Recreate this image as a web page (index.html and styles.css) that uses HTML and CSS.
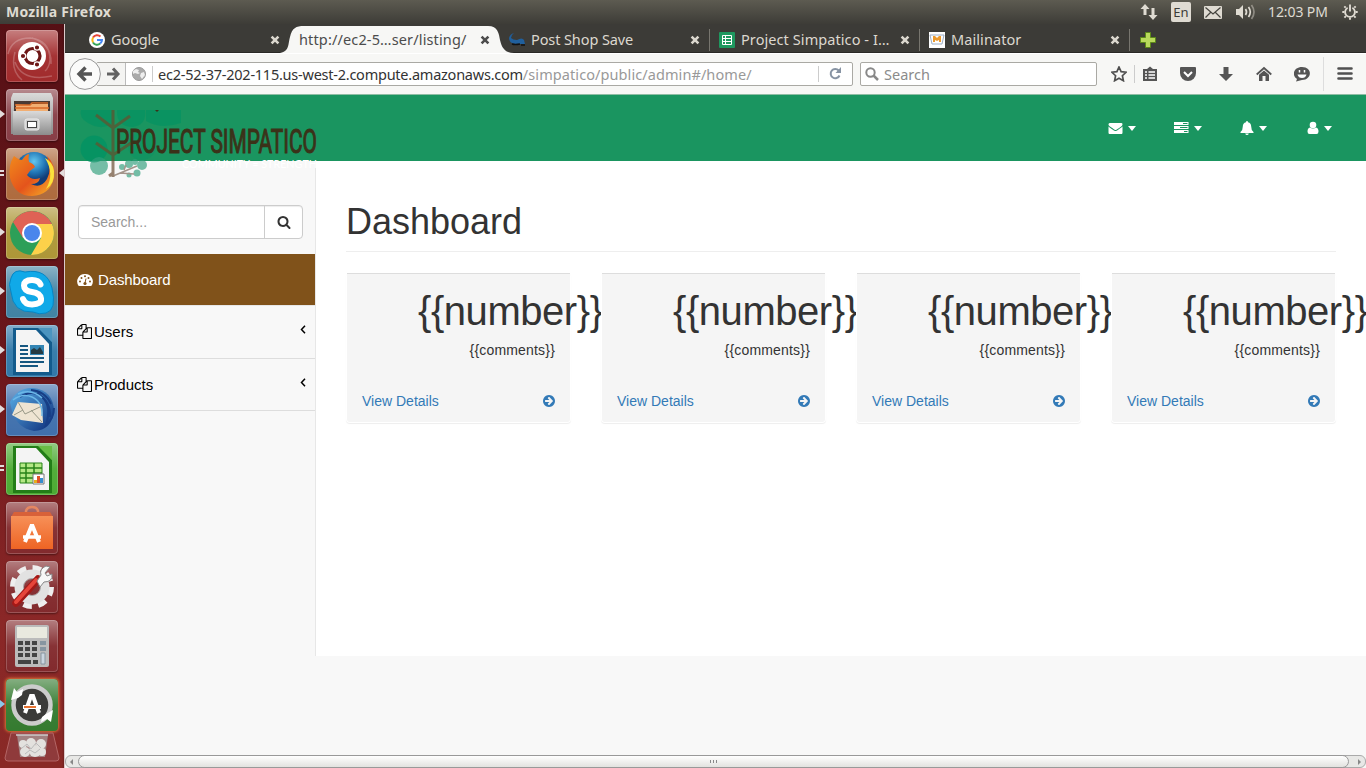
FILE: index.html
```html
<!DOCTYPE html>
<html lang="en">
<head>
<meta charset="utf-8">
<title>Mozilla Firefox</title>
<link rel="stylesheet" href="styles.css">
</head>
<body>
<svg class="defs" width="0" height="0">
<defs>
<linearGradient id="gloss" x2="0" y2="1"><stop stop-color="#fff" stop-opacity=".42"/><stop offset=".5" stop-color="#fff" stop-opacity=".08"/><stop offset="1" stop-color="#fff" stop-opacity=".04"/></linearGradient>
<linearGradient id="silver" x2="0" y2="1"><stop stop-color="#dadada"/><stop offset="1" stop-color="#8c8c8c"/></linearGradient>
<linearGradient id="orange" x2="0" y2="1"><stop stop-color="#f79058"/><stop offset="1" stop-color="#ee6424"/></linearGradient>
<radialGradient id="globe" cx=".5" cy=".25"><stop stop-color="#64c6ee"/><stop offset=".6" stop-color="#2074b4"/><stop offset="1" stop-color="#123c76"/></radialGradient>
<linearGradient id="fox" x2="1" y2="1"><stop stop-color="#f28c1c"/><stop offset=".55" stop-color="#e4541c"/><stop offset="1" stop-color="#f8b828"/></linearGradient>
<linearGradient id="bird" x2="1" y2="1"><stop stop-color="#5cb2ea"/><stop offset="1" stop-color="#0c2c78"/></linearGradient>
<symbol id="mail" viewBox="0 0 1792 1792"><path d="M1792 710v794q0 66-47 113t-113 47h-1472q-66 0-113-47t-47-113v-794q44 49 101 87 362 246 497 345 57 42 92.500 65.500t94.500 48 110 24.500h2q51 0 110-24.500t94.500-48 92.500-65.500q170-123 498-345 57-39 100-87zm0-294q0 79-49 151t-122 123q-376 261-468 325-10 7-42.500 31t-54 38.500-52 32.500-57.500 27-50 9h-2q-23 0-50-9t-57.500-27-52-32.500-54-38.500-42.500-31q-91-64-262-182.500t-205-142.500q-62-42-117-115.500t-55-136.500q0-78 41.500-130t118.500-52h1472q65 0 112.500 47t47.500 113z"/></symbol>
<symbol id="go" viewBox="128 128 1536 1536"><path d="M1413 896q0-27-18-45l-91-91-362-362q-18-18-45-18t-45 18l-91 91q-18 18-18 45t18 45l189 189h-502q-26 0-45 19t-19 45v128q0 26 19 45t45 19h502l-189 189q-19 19-19 45t19 45l91 91q18 18 45 18t45-18l362-362 91-91q18-18 18-45zm251 0q0 209-103 385.500t-279.500 279.500-385.500 103-385.500-103-279.500-279.500-103-385.500 103-385.500 279.500-279.500 385.500-103 385.500 103 279.500 279.500 103 385.500z"/></symbol>
<symbol id="search" viewBox="0 0 1792 1792"><path d="M1216 832q0-185-131.500-316.500t-316.500-131.500-316.500 131.500-131.500 316.500 131.500 316.500 316.500 131.500 316.500-131.500 131.500-316.500zm512 832q0 52-38 90t-90 38q-54 0-90-38l-343-342q-179 124-399 124-143 0-273.500-55.500t-225-150-150-225-55.500-273.500 55.500-273.500 150-225 225-150 273.500-55.500 273.500 55.500 225 150 150 225 55.500 273.500q0 220-124 399l343 343q37 37 37 90z"/></symbol>
<symbol id="files" viewBox="0 0 1792 1792"><path d="M1696 384q40 0 68 28t28 68v1216q0 40-28 68t-68 28h-960q-40 0-68-28t-28-68v-288h-544q-40 0-68-28t-28-68v-672q0-40 20-88t48-76l408-408q28-28 76-48t88-20h416q40 0 68 28t28 68v328q68-40 128-40h416zm-544 213l-299 299h299v-299zm-640-384l-299 299h299v-299zm196 647l316-316v-416h-384v416q0 40-28 68t-68 28h-416v640h512v-256q0-40 20-88t48-76zm956 804v-1152h-384v416q0 40-28 68t-68 28h-416v640h896z"/></symbol>
<symbol id="close" viewBox="0 0 10 10"><path d="M1.600 1.600l6.800 6.800M8.400 1.600L1.600 8.400" fill="none" stroke="currentColor" stroke-width="2.600"/></symbol>
</defs>
</svg>
<div class="desktop">
<header class="topbar">
  <span class="topbar-title">Mozilla Firefox</span>
  <div class="indicators">
    <svg width="18" height="18" viewBox="0 0 18 18"><path d="M5 1L.5 6h3v6h3V6h3zM13 17l4.500-5h-3V5h-3v7h-3z"/></svg>
    <span class="lang">En</span>
    <svg class="ind-mail" width="18" height="13" viewBox="0 0 18 13"><rect width="18" height="13" rx="1"/><path d="M1.500 1.500L9 8l7.500-6.500M1.500 11.500l5-5M16.500 11.500l-5-5" fill="none" stroke="#45443e" stroke-width="1.200"/></svg>
    <svg class="ind-vol" width="20" height="16" viewBox="0 0 20 16"><path d="M0 5h3l4-4v14l-4-4H0z"/><g fill="none" stroke="#dfdbd2" stroke-width="1.700"><path d="M9.500 5q2 3 0 6M12.500 3q3.600 5 0 10"/><path d="M15.500 1q5 7 0 14" opacity=".45"/></g></svg>
    <span class="clock">12:03 PM</span>
    <svg class="ind-gear" width="16" height="16" viewBox="0 0 16 16" fill="none" stroke="#dfdbd2"><path d="M5.600 3.800a4.900 4.900 0 1 0 4.800 0" stroke-width="1.800"/><path d="M8 .5v7" stroke-width="1.900"/><path d="M3.700 3.700L2.300 2.300M12.300 3.700l1.400-1.400M2.500 8H.3M13.500 8h2.200M3.900 12.100l-1.500 1.500M12.100 12.100l1.500 1.500M8 13.500v2.200" stroke-width="1.900"/></svg>
  </div>
</header>
<nav class="launcher">
  <svg class="tile t-ubuntu" viewBox="0 0 52 52"><rect class="g" width="52" height="52" rx="4"/><path d="M2 24Q6 8 24 8 44 10 44 30q-1 8-5 11M16 50Q4 40 9 22M26 8q20 6 19 26M9 32Q16 52 46 46" fill="none" stroke="#fff" opacity=".22" stroke-width="1.500"/><circle cx="26" cy="26" r="14" fill="#fff"/><circle cx="26.500" cy="26" r="7.500" fill="none" stroke="#6d1717" stroke-width="3.200"/><g fill="#6d1717" stroke="#fff" stroke-width="1.200"><circle cx="17" cy="26" r="2.700"/><circle cx="31" cy="17.500" r="2.700"/><circle cx="31" cy="34.500" r="2.700"/></g></svg>
  <svg class="tile t-files" viewBox="0 0 52 52"><rect class="g" width="52" height="52" rx="4"/><path d="M5 9l2-5h38l2 5v36H5z" fill="url(#silver)"/><path d="M8 12h36v10H8z" fill="#493a35"/><path d="M10 15h32v7H10z" fill="#f1ae72"/><path d="M9 16h15l2-2h16M9 19h34" stroke="#d76929" stroke-width="1.500"/><path d="M7 22h38v24H7z" fill="url(#silver)"/><rect x="19" y="30" width="14" height="11" rx="2" fill="#ccc" stroke="#eee"/><rect x="21.500" y="32.500" width="9" height="6" fill="#fff" stroke="#444"/></svg>
  <svg class="tile t-firefox" viewBox="0 0 52 52"><rect class="g" width="52" height="52" rx="4"/><circle cx="28" cy="23" r="19" fill="url(#globe)"/><path d="M8 8q5 4 8 4 4-6 7-6-1 4 0 8 5 2 6 5-5 3-8 8 5 6 13 3-1 6-9 6 10 5 16-5 5-9 0-23 9 8 7 22-4 17-22 18Q9 48 4 30 2 17 8 8z" fill="url(#fox)"/><path d="M39 10q10 16 1 31 9-5 8-18-1-9-9-13z" fill="#fae23c"/></svg>
  <svg class="tile t-chrome" viewBox="0 0 52 52"><rect class="g" width="52" height="52" rx="4"/><circle cx="26" cy="26" r="22" fill="#2d9f58"/><path d="M7 15a22 22 0 0 1 39 2H26l-9 14z" fill="#df6255"/><path d="M46 17a22 22 0 0 1-21 31l10-17-5-14z" fill="#fdd14a"/><circle cx="26" cy="26" r="10" fill="#fff"/><circle cx="26" cy="26" r="8" fill="#4a86ec"/></svg>
  <svg class="tile t-skype" viewBox="0 0 52 52"><rect class="g" width="52" height="52" rx="4"/><path d="M5 12Q8 2 19 6q22-4 27 16 5 22-6 25-7 2-13-1Q7 47 5 26q-3-8 0-14z" fill="#10a9e8" stroke="#0786c4"/><path d="M34.500 18.500q-2-4.500-8.500-4.500-8 0-8 5.500t8 6.500 9 6.500-9 6q-7 0-9-5.500" fill="none" stroke="#fff" stroke-width="6" stroke-linecap="round"/></svg>
  <svg class="tile t-writer" viewBox="0 0 52 52"><rect class="g" width="52" height="52" rx="4"/><path d="M7 3h26l13 14v33H7z" fill="#135b8c"/><path d="M10 5h20l13 14v28H10z" fill="#f4f4f4"/><path d="M32 3h14v14z" fill="#4b94bf"/><path d="M14 21h8M14 25h8M14 29h8M14 33h24M14 37h24M14 41h18" stroke="#165780" stroke-width="2"/><path d="M24 20h14v10H24z" fill="#3385b4"/><path d="M25 29v-4l3-2 3 2 3-3 3 5v2" fill="#263b43"/></svg>
  <svg class="tile t-thunder" viewBox="0 0 52 52"><rect class="g" width="52" height="52" rx="4"/><path d="M4 18Q12 3 27 4q20 2 21 23-2 19-20 20-17-3-22-20z" fill="url(#bird)"/><path d="M12 18l24 2 1 19-22-3-9-5z" fill="#eee4d2"/><path d="M12 18l7 12 17-8M8 31l9-5M36 38l-11-12" stroke="#998" fill="none"/><path d="M14 13q12-8 22 0 10 9 4 28 8-7 8-17M31 9q14 8 13 24M25 6q14 1 20 14" fill="none" stroke="#173e86" stroke-width="2"/><path d="M7 16q9-7 19-3 11 5 10 19M12 10q13-6 24 4" fill="none" stroke="#6cb8e8" stroke-width="1.500"/></svg>
  <svg class="tile t-calc" viewBox="0 0 52 52"><rect class="g" width="52" height="52" rx="4"/><path d="M7 3h26l13 14v33H7z" fill="#237d18"/><path d="M10 5h20l13 14v28H10z" fill="#f4f4f4"/><path d="M32 3h14v14z" fill="#69bd45"/><path d="M14 20h22v20H14z" fill="#b4e885" stroke="#278318"/><path d="M14 25h22M14 30h22M14 35h22M20 20v20M28 20v20" stroke="#278318" stroke-width="1.500"/><path d="M27 31h11v10H27z" fill="#fff" stroke="#777"/><path d="M28 37h3v3h-3z" fill="#e8ad19"/><path d="M31 33h3v7h-3z" fill="#df532a"/><path d="M34 35h3v5h-3z" fill="#368dce"/></svg>
  <svg class="tile t-red" viewBox="0 0 52 52"><rect class="g" width="52" height="52" rx="4"/><path d="M20 17V9q1-4 6-4t6 4v8" fill="none" stroke="#e58761" stroke-width="2.500"/><path d="M8 10h36l3 5H5z" fill="#d86139"/><path d="M5 14h42v33H5z" fill="url(#orange)"/><path d="M19 40l6.500-16h1L33 40" fill="none" stroke="#fff" stroke-width="4"/><path d="M17 35h18" stroke="#fff" stroke-width="3.500"/></svg>
  <svg class="tile t-red" viewBox="0 0 52 52"><rect class="g" width="52" height="52" rx="4"/><circle cx="26" cy="26" r="19" fill="none" stroke="#eee" stroke-width="6" stroke-dasharray="8.500 6.420"/><circle cx="26" cy="26" r="13" fill="none" stroke="#e2e2e2" stroke-width="9"/><circle cx="26" cy="26" r="8.500" fill="none" stroke="#aaa"/><path d="M10 42l22-24" stroke="#a41917" stroke-width="7.500" stroke-linecap="round"/><path d="M10 41l20-22" stroke="#e6453a" stroke-width="4" stroke-linecap="round"/><path d="M31 20l4-6q-2-6 5-9l4 1-5 6 2 3 5-2q1 8-8 8l-4 5z" fill="#f7f7f7" stroke="#888"/></svg>
  <svg class="tile t-red" viewBox="0 0 52 52"><rect class="g" width="52" height="52" rx="4"/><rect x="9" y="5" width="34" height="42" rx="2" fill="#bbb"/><rect x="11" y="7" width="30" height="11" fill="#e9e9df"/><g fill="none" stroke="#434343" stroke-width="4" stroke-dasharray="5 2"><path d="M12 23h20M12 29h20M12 35h20"/></g><path d="M34 23h6M34 29h6" stroke="#8795a0" stroke-width="4"/><path d="M12 42h13M27 42h5" stroke="#434343" stroke-width="4"/><path d="M35 33h4v11h-4z" fill="#cad5df" stroke="#8795a0"/></svg>
  <svg class="tile t-update" viewBox="0 0 52 52"><rect class="g" width="52" height="52" rx="4"/><circle cx="26" cy="26" r="18.500" fill="#3b3b39" stroke="#ccc" stroke-width="4.500"/><path d="M5 21l3-12 3 4 6-3-1 6-4 3z" fill="#fff"/><path d="M47 31l-2 12-4-3-6 3 1-5 4-3z" fill="#fff"/><path d="M19 34l6-17h2l6 17" fill="none" stroke="#fff" stroke-width="4"/><path d="M17 28h18" stroke="#fff" stroke-width="4"/><path d="M18 28h12" stroke="#e77332" stroke-width="2"/></svg>
  <svg class="trash" viewBox="0 0 56 30"><path d="M7 1h42l6 25q0 3-3 3H4q-3 0-3-3z" fill="#8f3a3b" stroke="#b46565"/><path d="M13 3h31l-3 22H16z" fill="#aaa0a0" opacity=".7"/><g fill="#e3e1de"><circle cx="19" cy="12" r="4"/><circle cx="27" cy="11" r="5"/><circle cx="37" cy="12" r="5"/><circle cx="21" cy="20" r="5"/><circle cx="31" cy="19" r="6"/><circle cx="38" cy="20" r="4"/></g><path d="M18 16l5-4 4 5 5-6 5 5M21 22l5-4 5 3 5-4" fill="none" stroke="#bbb"/><path d="M12 3h32" stroke="#ccc" stroke-width="1.500"/></svg>
  <svg class="marks" viewBox="0 0 64 744"><g fill="#e3dcdc"><path d="M0 86v8l5-4zM0 204v8l5-4zM0 263v8l5-4zM0 322v8l5-4zM0 381v8l5-4zM64 145v8l-5-4z"/><path d="M0 146h4v2H0zM0 150h4v2H0zM0 441h4v2H0zM0 445h4v2H0z"/><path d="M0 676v8l5-4z" fill="#8bc7e9"/></g></svg>
</nav>
<main class="browser">
  <div class="tabs">
    <svg class="tab-shape" width="240" height="29" viewBox="0 0 240 29"><path d="M2 29C14 29 12 19 14 13 16 4 20 2 28 2H212C222 2 223 10 224 16 226 25 230 29 238 29z" fill="#f7f7f5"/></svg>
    <div class="tab"><svg width="16" height="16" viewBox="0 0 16 16"><circle cx="8" cy="8" r="8" fill="#fff"/><g fill="none" stroke-width="2"><path d="M4 5.600A4.800 4.800 0 0 1 11.500 4.500" stroke="#e64436"/><path d="M4 5.600a5 5 0 0 0 0 4.800" stroke="#f6b916"/><path d="M4 10.400a4.800 4.800 0 0 0 7.200 1.200" stroke="#35a557"/><path d="M8 8h5q0 2-1.800 3.600" stroke="#4486f4"/></g></svg><span class="tab-label">Google</span><svg class="x"><use href="#close"/></svg></div>
    <div class="tab active"><span class="tab-label">http://ec2-5…ser/listing/</span><svg class="x"><use href="#close"/></svg></div>
    <div class="tab"><svg width="16" height="16" viewBox="0 0 16 16"><path d="M5 1Q2 3 2 6q2 2 6 2 5-3 7 0l1 4H6Q0 11 0 6 1 2 5 1z" fill="#205f9c"/><path d="M3 12q3 1 8 0M12 13h4" fill="none" stroke="#111" stroke-width="1.500"/></svg><span class="tab-label">Post Shop Save</span><svg class="x"><use href="#close"/></svg></div>
    <div class="tab line"><svg width="16" height="16" viewBox="0 0 16 16"><rect width="16" height="16" rx="1" fill="#1e985f"/><path d="M3.500 3.500h9v9h-9zM3 6.500h10M3 9.500h10M6.500 3v10" fill="none" stroke="#fff"/></svg><span class="tab-label wide">Project Simpatico - I…</span><svg class="x"><use href="#close"/></svg></div>
    <div class="tab line"><svg width="16" height="16" viewBox="0 0 16 16"><path d="M0 0h16v16H0z" fill="#fff"/><path d="M1 3h14l-2 9H3z" fill="none" stroke="#9caec6"/><path d="M4 10V4h2l2 2 2-2h2v6h-2V8L8 9 6 8v2z" fill="#ec9a2e"/></svg><span class="tab-label wide">Mailinator</span><svg class="x"><use href="#close"/></svg></div>
    <div class="newtab line"><svg width="16" height="16" viewBox="0 0 16 16"><path d="M5.500.5h5v5h5v5h-5v5h-5v-5h-5v-5h5z" fill="#b9d95c" stroke="#5d8919"/></svg></div>
  </div>
  <div class="toolbar">
    <svg class="back" width="32" height="32" viewBox="0 0 32 32"><circle cx="16" cy="16" r="15.400" fill="#fbfbfa" stroke="#999"/><path d="M16.500 9.500L10 16l6.500 6.500M10.500 16H23" fill="none" stroke="#555" stroke-width="3.400"/></svg>
    <div class="urlbar">
      <div class="fwd"><svg width="14" height="14" viewBox="0 0 14 14"><path d="M6 1.500L11 7l-5 5.500M0 7h11" fill="none" stroke="#626262" stroke-width="3"/></svg></div>
      <svg class="world" width="14" height="14" viewBox="0 0 14 14"><circle cx="7" cy="7" r="6.500" fill="#aaa" stroke="#999"/><path d="M1 4l3-2 3 1-1 2 2 1-2 1-3-1-2 1zM9 6l3-1 1 3-3 4-2-3z" fill="#eee"/></svg>
      <span class="url"><b>ec2-52-37-202-115.us-west-2.compute.amazonaws.com</b>/simpatico/public/admin#/home/</span>
      <div class="reload"><svg width="13" height="13" viewBox="0 0 13 13"><path d="M10.500 8.500a4.600 4.600 0 1 1-.8-5" fill="none" stroke="#8793a3" stroke-width="2"/><path d="M12 0v6H6.500z" fill="#8793a3"/></svg></div>
    </div>
    <div class="searchbox"><svg width="14" height="14" viewBox="0 0 14 14" fill="none" stroke="#888"><circle cx="5.500" cy="5.500" r="4.200" stroke-width="2"/><path d="M8.500 8.500L13 13" stroke-width="2.500"/></svg><span>Search</span></div>
    <div class="tools">
      <svg width="16" height="16" viewBox="0 0 16 16"><path d="M8 1l2.100 4.700 5.100.5-3.800 3.500 1 5L8 12.200l-4.400 2.500 1-5L.8 6.200l5.100-.5z" fill="none" stroke="#505050" stroke-width="1.700"/></svg>
      <i class="sep"></i>
      <svg width="16" height="16" viewBox="0 0 16 16"><path d="M1 3h4l3-2.500L11 3h4v12H1z" fill="#555"/><path d="M3 6h2M6.500 6H13M3 9h2M6.500 9H13M3 12h2M6.500 12H13" stroke="#fff" stroke-width="1.500"/></svg>
      <svg width="16" height="16" viewBox="0 0 16 16"><path d="M1 1h14q1 0 1 1v5a8 8 0 0 1-16 0V2q0-1 1-1z" fill="#555"/><path d="M4 6l4 4 4-4" fill="none" stroke="#fff" stroke-width="2"/></svg>
      <svg width="16" height="16" viewBox="0 0 16 16"><path d="M5.500 1h5v7H15l-7 7-7-7h4.500z" fill="#555"/></svg>
      <svg width="16" height="16" viewBox="0 0 16 16"><path d="M.7 8.500L8 2l7.300 6.500" fill="none" stroke="#555" stroke-width="1.800"/><path d="M3 8.800L8 4.500l5 4.300V15H9.500v-5h-3v5H3z" fill="#555"/></svg>
      <svg width="16" height="16" viewBox="0 0 16 16"><path d="M8 1c11 0 10 13 0 13l-6 1.500L3 13C-3 9 0 1 8 1z" fill="#555"/><path d="M5.500 4v2.500M10.500 4v2.500" stroke="#fff" stroke-width="1.500"/><path d="M3.500 8.500h9q-1 3.500-4.500 3.500T3.500 8.500z" fill="#fff"/></svg>
      <i class="sep tall"></i>
      <svg width="16" height="16" viewBox="0 0 16 16"><path d="M1.500 2.500h13M1.500 7.500h13M1.500 12.500h13" stroke="#505050" stroke-width="2.600" stroke-linecap="round"/></svg>
    </div>
  </div>
  <div class="page">
    <header class="navbar">
      <svg class="logo" width="240" height="70" viewBox="0 0 240 70">
        <g fill="#009363"><circle cx="14" cy="39" r="13.500" opacity=".75"/><path d="M1 0h31v14q-8 5-18 2Q-2 10 1 0zM37 0h28q2 15-12 17Q36 17 37 0zM66 0h35v13q-20 7-35-2z" opacity=".6"/><circle cx="62" cy="36" r="14" opacity=".3"/></g>
        <g fill="#2f9f7b" opacity=".65"><circle cx="19" cy="56" r="9"/><circle cx="49" cy="54" r="4"/><circle cx="55" cy="52" r="3"/><circle cx="62" cy="55" r="5"/><circle cx="42" cy="57" r="3"/><circle cx="49" cy="65" r="2.500"/><circle cx="57" cy="63" r="3.500"/></g>
        <g fill="none" stroke="#4c633b" stroke-width="3"><path d="M33 0v51M16 5l17 13L50 6M16 33l17 12 18-12"/><path d="M33 66l24-10M40 63l14 1M44 60l2-5" stroke="#a3948a" stroke-width="1.500"/><path d="M33 51v16M29 66l4-3" stroke="#96816f"/></g>
        <path d="M75 0h4l-2 2z" fill="#3b3219"/>
        <text class="brand" x="36" y="43" textLength="201" lengthAdjust="spacingAndGlyphs">PROJECT SIMPATICO</text>
        <text class="motto" x="102" y="57.500" textLength="135" lengthAdjust="spacingAndGlyphs">COMMUNITY = STRENGTH</text>
      </svg>
      <div class="nav-icons">
        <div><svg width="15" height="14"><use href="#mail"/></svg><i class="caret"></i></div>
        <div><svg width="15" height="14" viewBox="0 0 15 14"><path d="M0 1h14.500v3H0zM0 5h14.500v3H0zM0 9h14.500v3H0z"/><path d="M9 2.500h4.500M6 6.500h7.500M10 10.500h3.500" stroke="#1a9560"/></svg><i class="caret"></i></div>
        <div><svg width="14" height="14" viewBox="0 0 14 14"><path d="M7 0q1 0 1 1.200 3.200.8 3.200 4.300 0 4 2.300 5.500v1H.5v-1q2.300-1.500 2.300-5.500Q2.800 2 6 1.200 6 0 7 0zM5.200 12.500h3.600Q8.500 14 7 14t-1.800-1.500z"/></svg><i class="caret"></i></div>
        <div><svg width="12" height="14" viewBox="0 0 12 14"><circle cx="6" cy="4" r="3.300"/><path d="M3 6.500q3 2 6 0 2.500.5 2.500 4 0 2.500-2 2.500h-7q-2 0-2-2.500 0-3.500 2.500-4z"/></svg><i class="caret"></i></div>
      </div>
    </header>
    <div class="body">
      <aside class="sidebar">
        <div class="side-search"><span>Search...</span><button><svg width="14" height="14"><use href="#search"/></svg></button></div>
        <a class="item current"><svg width="16" height="14" viewBox="0 0 16 14"><path d="M8 1a7.500 7.500 0 0 1 6.300 12H1.700A7.500 7.500 0 0 1 8 1z" fill="#fff"/><g fill="#80521a"><circle cx="3" cy="8.500" r="1"/><circle cx="4.500" cy="5" r="1"/><circle cx="8" cy="3.300" r="1"/><circle cx="11.500" cy="5" r="1"/><circle cx="13" cy="8.500" r="1"/><circle cx="8" cy="10.500" r="1.600"/></g><path d="M8 10l1-4.500" stroke="#80521a"/></svg><span>Dashboard</span></a>
        <a class="item"><svg width="15" height="15"><use href="#files"/></svg><span>Users</span><svg class="chev" width="6" height="9" viewBox="0 0 6 9"><path d="M5 .7L1.500 4.500 5 8.300"/></svg></a>
        <a class="item low"><svg width="15" height="15"><use href="#files"/></svg><span>Products</span><svg class="chev" width="6" height="9" viewBox="0 0 6 9"><path d="M5 .7L1.500 4.500 5 8.300"/></svg></a>
      </aside>
      <section class="content">
        <h1>Dashboard</h1>
        <div class="cards">
          <div class="card"><div class="stat"><div class="num">{{number}}</div><div class="com">{{comments}}</div></div><a class="foot"><span>View Details</span><svg width="12" height="12"><use href="#go"/></svg></a></div>
          <div class="card"><div class="stat"><div class="num">{{number}}</div><div class="com">{{comments}}</div></div><a class="foot"><span>View Details</span><svg width="12" height="12"><use href="#go"/></svg></a></div>
          <div class="card"><div class="stat"><div class="num">{{number}}</div><div class="com">{{comments}}</div></div><a class="foot"><span>View Details</span><svg width="12" height="12"><use href="#go"/></svg></a></div>
          <div class="card"><div class="stat"><div class="num">{{number}}</div><div class="com">{{comments}}</div></div><a class="foot"><span>View Details</span><svg width="12" height="12"><use href="#go"/></svg></a></div>
        </div>
      </section>
    </div>
  </div>
  <div class="hscroll"><i class="arrow left"></i><div class="thumb"><i></i><i></i><i></i></div><i class="arrow right"></i></div>
</main>
</div>
</body>
</html>
```
FILE: styles.css
```css
* { box-sizing: border-box; }
body { margin: 0; overflow: hidden; font: 14px/20px "Liberation Sans", Arial, sans-serif; color: #333; }
svg { display: block; flex: none; }
.defs { position: absolute; }
.desktop { width: 1366px; height: 768px; display: grid; grid-template-columns: 65px 1301px; grid-template-rows: 24px 744px; overflow: hidden; }

.topbar { grid-column: 1 / 3; display: flex; justify-content: space-between; align-items: center; padding: 0 8px 0 6px; background: linear-gradient(#5d5b51, #3d3c37); color: #dfdbd2; font: 14px/24px "Noto Sans", sans-serif; }
.topbar-title { font-weight: 700; font-size: 14px; letter-spacing: .25px; }
.indicators { display: flex; align-items: center; fill: #dfdbd2; }
.lang { width: 20px; height: 20px; margin-left: 13px; border-radius: 2px; background: #dfdbd2; color: #3c3b37; font-size: 13px; line-height: 20px; text-align: center; }
.ind-mail { margin-left: 13px; }
.ind-vol { margin-left: 14px; }
.clock { width: 62px; margin-left: 12px; white-space: nowrap; letter-spacing: -.1px; }
.ind-gear { margin-left: 12px; }

.launcher { position: relative; display: flex; flex-direction: column; gap: 7px; padding: 6px 0 0 6px; background: linear-gradient(90deg, transparent 62px, rgba(0,0,0,.2)), linear-gradient(#561015, #6b171b 45%, #8a2727 80%, #892926); border-right: 1px solid #dcc9ca; }
.tile { width: 52px; height: 52px; border-radius: 4px; box-shadow: inset 0 0 0 1px rgba(255,255,255,.2), 0 1px 2px rgba(0,0,0,.4); }
.g { fill: url(#gloss); }
.t-ubuntu { background: #9d2223; }
.t-files { background: #83363f; }
.t-firefox { background: #ab6536; }
.t-chrome { background: #aa922f; }
.t-skype { background: #397e9f; }
.t-writer { background: #2873a5; }
.t-thunder { background: #386aa9; }
.t-calc { background: #45a72b; }
.t-red { background: #7d2124; }
.t-update { background: #2c7527; box-shadow: 0 0 3px 1px #df7639; }
.trash { width: 56px; height: 30px; margin: -6px 0 0 -2px; }
.marks { position: absolute; left: 0; top: 0; width: 64px; height: 744px; }

.browser { display: grid; grid-template-rows: 29px 42px 660px 13px; min-width: 0; background: #f7f7f5; }
.tabs { position: relative; display: flex; padding-left: 14px; background: #3c3b37; border-bottom: 1px solid #2a2926; font: 14.500px/29px "Noto Sans", sans-serif; color: #dcd8cf; }
.tab-shape { position: absolute; left: 211px; top: 0; }
.tab { position: relative; width: 210px; height: 32px; display: flex; align-items: center; gap: 6px; padding: 0 9px 0 10px; }
.tab-label { flex: 1; white-space: nowrap; overflow: hidden; letter-spacing: -.1px; padding-bottom: 2px; }
.wide { letter-spacing: .08px; }
.active { color: #4c4c4c; }
.active .tab-label { letter-spacing: .14px; }
.x { width: 10px; height: 10px; }
.line::before { content: ""; position: absolute; left: 0; top: 5px; width: 1px; height: 22px; background: #77756e; }
.newtab { position: relative; padding: 8px 11px; }

.toolbar { display: flex; align-items: center; padding-left: 4px; border-bottom: 1px solid #8fbda4; border-top: 1px solid #fff; font: 14.500px/22px "Noto Sans", sans-serif; }
.back { position: relative; z-index: 1; }
.urlbar { width: 757px; height: 24px; margin-left: -5px; display: flex; align-items: center; border: 1px solid #aaa9a4; border-radius: 2px; background: #fff; }
.fwd { width: 29px; height: 22px; display: flex; align-items: center; padding-left: 10px; background: #f4f4f2; border-right: 1px solid #bbb; }
.world { margin-left: 6px; }
.url { flex: 1; margin-left: 6px; padding-left: 5px; border-left: 1px solid #ccc; line-height: 16px; white-space: nowrap; color: #999; letter-spacing: .08px; }
.url b { font-weight: 400; color: #333; letter-spacing: -.24px; }
.reload { height: 16px; padding: 1px 10px 0; border-left: 1px solid #ccc; }
.searchbox { width: 237px; height: 24px; margin-left: 7px; display: flex; align-items: center; gap: 5px; padding-left: 4px; border: 1px solid #aaa9a4; border-radius: 2px; background: #fff; color: #8b8b8b; }
.tools { display: flex; align-items: center; margin-left: 14px; }
.tools svg + svg { margin-left: 22px; }
.sep { width: 1px; height: 18px; margin: 0 7px; background: #ccc; }
.tall { height: 34px; margin: 0 13px; background: #ddd; }

.page { background: #f8f8f8; min-width: 0; }
.navbar { height: 66px; display: flex; justify-content: space-between; background: #1a9560; }
.logo { position: relative; z-index: 2; margin: 15px 0 0 15px; }
.brand { font: 34px "Liberation Sans Narrow", Roboto, sans-serif; fill: #3b3219; stroke: #3b3219; stroke-width: 1.100px; }
.motto { font: 11px Lato, sans-serif; fill: #fff; }
.nav-icons { display: grid; grid-template-columns: 66px 66px 67px 59px; fill: #fff; }
.nav-icons > div { display: flex; align-items: center; gap: 5px; height: 66px; }
.caret { border: 4.500px solid transparent; border-width: 5px 4px 0; border-top-color: #fff; }
.body { display: grid; grid-template-columns: 250px 1051px; height: 495px; }
.sidebar { padding-top: 44px; font-size: 15px; color: #000; }
.side-search { display: flex; width: 225px; height: 34px; margin: 0 0 15px 13px; background: #fff; border: 1px solid #ccc; border-radius: 4px; font-size: 14px; line-height: 32px; color: #999; box-shadow: inset 0 1px 1px rgba(0,0,0,.075); }
.side-search span { flex: 1; padding-left: 12px; }
.side-search button { width: 38px; padding: 0 0 0 12px; background: none; border: 0; border-left: 1px solid #ccc; fill: #333; }
.item { height: 52.500px; display: flex; align-items: center; gap: 2px; padding: 0 9px 0 12px; border-bottom: 1px solid #ddd; }
.item span { flex: 1; }
.low { padding-top: 1px; }
.current { height: 52px; gap: 5px; background: #80521a; border-bottom: 1px solid #e7e7e7; color: #fff; letter-spacing: -.1px; }
.chev { margin-top: -5px; fill: none; stroke: #000; stroke-width: 1.500px; }
.content { padding: 0 30px; background: #fff; border-left: 1px solid #e7e7e7; }
h1 { margin: 41px 0 21px; padding-bottom: 9px; border-bottom: 1px solid #eee; font-size: 36px; line-height: 40px; font-weight: 400; }
.cards { display: grid; grid-template-columns: repeat(4, 225px); gap: 30px; }
.card { position: relative; height: 150px; padding: 0 1px 1px; border-radius: 4px; background: #fff; box-shadow: 0 1px 1px rgba(0,0,0,.07); }
.stat { height: 112px; padding: 15px 16px 0 71px; border-top: 1px solid #ddd; background: #f5f5f5; }
.num { font-size: 40px; line-height: 44px; white-space: nowrap; letter-spacing: -.45px; }
.com { margin: 7px -1px 0 -20px; text-align: right; letter-spacing: .18px; }
.foot { height: 37px; display: flex; justify-content: space-between; align-items: center; padding: 0 15px 5px; border-radius: 0 0 3px 3px; background: #f5f5f5; color: #337ab7; fill: #337ab7; }

.hscroll { display: flex; justify-content: space-between; align-items: center; background: #e8e8e6; border: 1px solid #aaa; border-radius: 6px; }
.thumb { width: 1271px; height: 13px; display: flex; align-items: center; justify-content: center; gap: 2px; border: 1px solid #999; border-radius: 7px; background: linear-gradient(#fff, #e2e2df); }
.thumb i { width: 1px; height: 3px; background: #888; }
.arrow { border: 3px solid transparent; }
.left { margin: 0 5px 0 4px; border-right-color: #888; border-left: 0; }
.right { margin: 0 4px 0 9px; border-left-color: #888; border-right: 0; }
```
